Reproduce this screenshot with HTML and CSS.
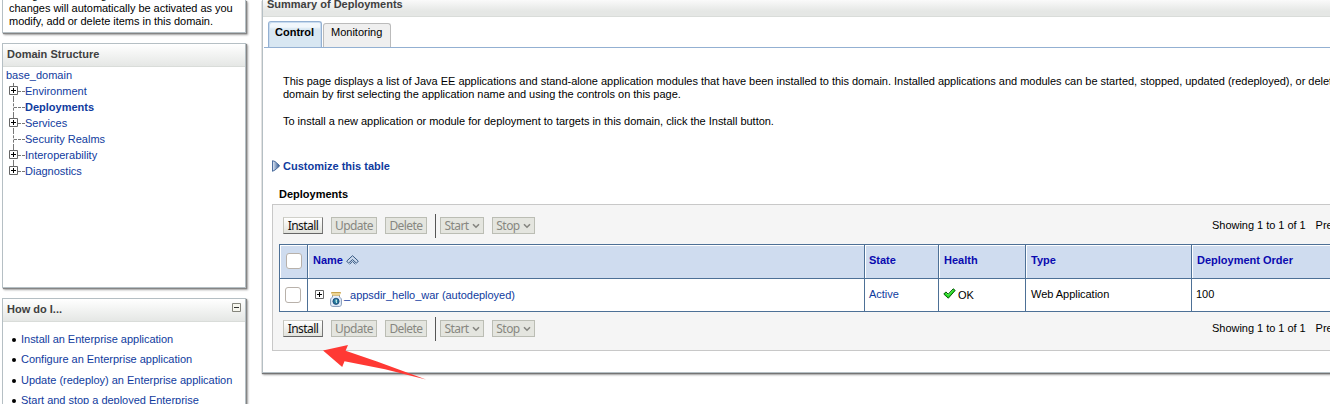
FILE: index.html
```html
<!DOCTYPE html>
<html lang="en">
<head>
<meta charset="utf-8">
<title>Summary of Deployments</title>
<link rel="stylesheet" href="styles.css">
</head>
<body>
<svg class="defs" width="0" height="0">
  <symbol id="plus" viewBox="0 0 9 9"><path d="M.5.5h8v8h-8z" fill="#fff" stroke="#666"/><path d="M2 4.5h5M4.5 2v5" stroke="#000"/></symbol>
  <symbol id="chevron" viewBox="0 0 8 6"><path d="M1 1.2l3 3 3-3" fill="none" stroke="#85857f" stroke-width="1.6"/></symbol>
</svg>
<div class="page">
  <aside class="side">
    <section class="box notice"><p>configuration editing is enabled. Future<br>changes will automatically be activated as you<br>modify, add or delete items in this domain.</p></section>
    <section class="box domain">
      <h2>Domain Structure</h2>
      <div class="tree">
        <a class="root">base_domain</a>
        <ul>
          <li><svg class="plus"><use href="#plus"/></svg><a>Environment</a></li>
          <li><a class="current">Deployments</a></li>
          <li><svg class="plus"><use href="#plus"/></svg><a>Services</a></li>
          <li><a>Security Realms</a></li>
          <li><svg class="plus"><use href="#plus"/></svg><a>Interoperability</a></li>
          <li class="last"><svg class="plus"><use href="#plus"/></svg><a>Diagnostics</a></li>
        </ul>
      </div>
    </section>
    <section class="box howto">
      <h2>How do I...<svg class="minus" viewBox="0 0 9 9"><path d="M.5.5h8v8h-8z" fill="#f6f6ee" stroke="#85857c"/><path d="M2 4.5h5" stroke="#333"/></svg></h2>
      <ul class="links">
        <li><a>Install an Enterprise application</a></li>
        <li><a>Configure an Enterprise application</a></li>
        <li><a>Update (redeploy) an Enterprise application</a></li>
        <li><a>Start and stop a deployed Enterprise</a></li>
      </ul>
    </section>
  </aside>
  <main class="main">
    <h1>Summary of Deployments</h1>
    <nav class="tabs"><a class="tab active">Control</a><a class="tab">Monitoring</a></nav>
    <div class="intro">
      <p>This page displays a list of Java EE applications and stand-alone application modules that have been installed to this domain. Installed applications and modules can be started, stopped, updated (redeployed), or deleted from the<br>domain by first selecting the application name and using the controls on this page.</p>
      <p>To install a new application or module for deployment to targets in this domain, click the Install button.</p>
    </div>
    <a class="customize"><svg width="8" height="12" viewBox="0 0 8 12"><defs><linearGradient id="tri"><stop offset="0" stop-color="#e4edfa"/><stop offset="1" stop-color="#31578f"/></linearGradient></defs><path d="M.5.7v10.6L3 10 7.3 6.3v-1L3 1.5z" fill="url(#tri)" stroke="#3b6094" stroke-width=".9"/></svg>Customize this table</a>
    <h3>Deployments</h3>
    <div class="panel">
      <div class="toolbar">
        <button class="install">Install</button><button class="update" disabled>Update</button><button class="delete" disabled>Delete</button><i></i><button class="start" disabled>Start<svg><use href="#chevron"/></svg></button><button class="stop" disabled>Stop<svg><use href="#chevron"/></svg></button>
        <span class="count">Showing 1 to 1 of 1</span><span>Previous</span>
      </div>
      <div class="grid head">
        <div><b class="check"></b></div>
        <div>Name<svg class="sort" viewBox="0 0 13 10"><path d="M.7 6.1L6.5.7l5.8 5.4-1.8 2.1-4-3.7-4 3.7z" fill="#cbd9ed" stroke="#365880"/><path d="M3.6 9.2l2.9-2.8 2.9 2.8" fill="none" stroke="#365880"/></svg></div>
        <div>State</div><div>Health</div><div>Type</div><div>Deployment Order</div>
      </div>
      <div class="grid row">
        <div><b class="check"></b></div>
        <div class="name"><svg class="plus"><use href="#plus"/></svg><svg class="jar" viewBox="0 0 12 15"><path d="M2.5 3.5v1.6C1.2 5.8.6 6.7.6 8v4.2c0 1.4.8 2.2 2.2 2.2h6.4c1.4 0 2.2-.8 2.2-2.2V8c0-1.3-.6-2.2-1.9-2.9V3.5" fill="#e5effb" stroke="#8298b8"/><path d="M1.2.9h9.6M2 3h8" stroke="#b78616" stroke-width="1.2"/><path d="M1.6 2h8.8" stroke="#ffe69b"/><circle cx="6" cy="9.3" r="3.1" fill="#247a9c" stroke="#173e70" stroke-width=".8"/><path d="M5.7 7.3l1.5.7-.6 1.3.7 1-1 .9-.7-1.8z" fill="#d5f5ef"/></svg><a>_appsdir_hello_war (autodeployed)</a></div>
        <div><a>Active</a></div>
        <div><svg class="ok" viewBox="0 0 13 11"><path d="M.8 6.1l2.1-2.2 2.3 2.3L10.2.8l2 1.6-6.9 7.8z" fill="#20d820" stroke="#075b08"/><path d="M3 5.1l2.2 2.2 5-5.2" fill="none" stroke="#86ff76" stroke-width=".7"/></svg><span class="health">OK</span></div>
        <div>Web Application</div><div>100</div>
      </div>
      <div class="toolbar">
        <button class="install">Install</button><button class="update" disabled>Update</button><button class="delete" disabled>Delete</button><i></i><button class="start" disabled>Start<svg><use href="#chevron"/></svg></button><button class="stop" disabled>Stop<svg><use href="#chevron"/></svg></button>
        <span class="count">Showing 1 to 1 of 1</span><span>Previous</span>
      </div>
    </div>
  </main>
  <svg class="arrow" viewBox="0 0 104 36"><path d="M0 5.4L25 0l-2.4 5.7L54 16.6l49 18-41-10.3-40.5-8-2.3 5.8z" fill="#ff3934"/></svg>
</div>
</body>
</html>
```
FILE: styles.css
```css
* { box-sizing: border-box; }
body { margin: 0; background: #fff; color: #000; font: 11px/13px "Liberation Sans", Arial, sans-serif; }
h1, h2, h3, p, ul { margin: 0; padding: 0; }
ul { list-style: none; }
svg { display: block; flex: none; }
a { color: #103b9e; }
.defs { position: absolute; }
.page { position: relative; display: flex; gap: 16px; width: 1330px; height: 404px; padding-left: 2px; overflow: hidden; }
.side { width: 244px; flex: none; display: flex; flex-direction: column; gap: 10px; }
.box { flex: none; border: 1px solid #b5bfc4; box-shadow: 1px 1px 1px #858585, 2px 2px 2px #aaa; background: #fff; }
.notice { height: 33px; display: flex; align-items: flex-end; padding: 0 0 4px 6px; border-top: 0; white-space: nowrap; letter-spacing: -.03px; }
.domain { height: 245px; }
.howto { height: 130px; }
h1, h2 { background: linear-gradient(#fff, #e5e7e5); border-bottom: 1px solid #d9dcd9; color: #404040; font-size: 11px; line-height: 13px; }
h2 { height: 23px; padding: 4px 4px 0; display: flex; justify-content: space-between; }
.minus { width: 9px; height: 9px; }
.tree { padding: 0 3px; line-height: 16px; }
.root { display: block; height: 16px; }
.tree ul { padding-left: 3px; }
.tree li { display: flex; align-items: center; height: 16px; padding-left: 16px; position: relative; }
.tree li::before { content: ""; position: absolute; left: 4px; top: 0; height: 16px; border-left: 1px dashed #777; }
.tree li.last::before { height: 8px; }
.tree li::after { content: ""; position: absolute; left: 5px; top: 8px; width: 11px; border-top: 1px dashed #777; }
.plus { width: 9px; height: 9px; }
.tree .plus { position: absolute; left: 0; top: 3px; z-index: 1; }
.current { font-weight: bold; }
.links { padding: 7px 0 0 18px; letter-spacing: -.02px; }
.links li { height: 20.4px; line-height: 20px; position: relative; white-space: nowrap; }
.links li::before { content: ""; position: absolute; left: -9px; top: 9px; width: 4px; height: 4px; border-radius: 2px; background: #000; }
.main { width: 1300px; height: 373px; flex: none; border: solid #b5bfc4; border-width: 0 0 1px 1px; box-shadow: 0 1px 1px #747474, 1px 2px 2px #aaa; background: #fff; }
h1 { height: 17px; padding-left: 4px; background: linear-gradient(#fafafa, #e5e7e5 70%); line-height: 9px; }
.tabs { display: flex; align-items: flex-end; gap: 2px; height: 31px; margin-left: 1px; padding-left: 4px; border-bottom: 1px solid #93b0d2; }
.tab { width: 67px; height: 24px; padding: 2px 6px 0; border: 1px solid #bbb; border-bottom: 0; border-radius: 3px 3px 0 0; background: #efefef; color: #000; }
.tab.active { width: 54px; height: 26px; padding: 4px 6px 0; margin-right: -1px; border-color: #93b0d2; background: linear-gradient(#f1f7fc 5px, #d8e7f2 7px); box-shadow: inset 1px 1px #c8dbef, inset -1px 0 #c8dbef; font-weight: bold; }
.tab + .tab { width: 68px; padding-left: 7px; }
.intro { padding: 27px 0 0 20px; height: 112px; white-space: nowrap; letter-spacing: -.018px; }
.intro p + p { margin-top: 14px; }
.customize { display: flex; align-items: center; gap: 3px; margin-left: 9px; height: 13px; font-weight: bold; }
.customize svg { margin-top: -1px; }
h3 { margin: 15px 0 0 16px; height: 16px; font-size: 11px; line-height: 13px; }
.panel { margin-left: 9px; height: 147px; padding-left: 6px; border: 1px solid #c8c8c8; border-right: 0; background: #f5f5f5; }
.toolbar { display: flex; align-items: center; height: 38px; padding: 3px 0 0 4px; }
.grid + .toolbar { height: 33px; padding-top: 0; }
button { height: 17px; padding: 0; margin-right: 8px; border: 1px solid #bbbdb4; background: #e4e5df; color: #878781; font: 12px/15px "Noto Sans", sans-serif; letter-spacing: -.55px; display: flex; align-items: center; justify-content: center; gap: 3px; }
button svg { width: 8px; height: 6px; margin-top: 1px; }
.install { width: 40px; background: linear-gradient(#fff, #e1e2dc); border-color: #d0d0ca #777 #666 #c4c4bc; color: #111; }
.update { width: 46px; }
.delete { width: 42px; }
.start { width: 44px; }
.stop { width: 43px; }
.toolbar i { width: 1px; height: 24px; margin-right: 4px; background: #555; }
.count { margin-left: 669px; margin-right: 10px; white-space: nowrap; letter-spacing: -.03px; }
.grid { display: grid; grid-template-columns: 28px 557px 74px 87px 166px 180px; border-left: 1px solid #4d7096; }
.grid > div { display: flex; align-items: center; padding-left: 4px; border-right: 1px solid #4d7096; white-space: nowrap; }
.head { border-top: 1px solid #4d7096; margin-top: 1px; }
.head > div { height: 33px; padding-bottom: 2px; background: #cfdcef; box-shadow: inset 1px 1px #fff; color: #0a0aaf; font-weight: bold; padding-left: 5px; }
.head > div:first-child { padding: 0 0 1px 6px; }
.head > div:nth-child(3) { padding-left: 4px; }
.row { border-top: 1px solid #4d7096; border-bottom: 1px solid #4d7096; }
.row > div { height: 32px; padding-bottom: 1px; background: #fff; letter-spacing: -.03px; }
.row > div:nth-child(5) { padding-left: 5px; }
.name a, .health { padding-top: 2px; }
.check { width: 16px; height: 16px; border: 1px solid #b8b1aa; border-radius: 3px; background: #fff; }
.row .check { margin-left: 1px; }
.sort { width: 13px; height: 10px; margin: -2px 0 0 3px; }
.row .plus { margin: 0 6px 0 3px; }
.jar { width: 12px; height: 15px; margin: 9px 2px 0 0; }
.ok { width: 13px; height: 11px; margin: -3px 2px 0 0; }
.arrow { position: absolute; left: 323px; top: 345px; width: 104px; height: 36px; }
```
